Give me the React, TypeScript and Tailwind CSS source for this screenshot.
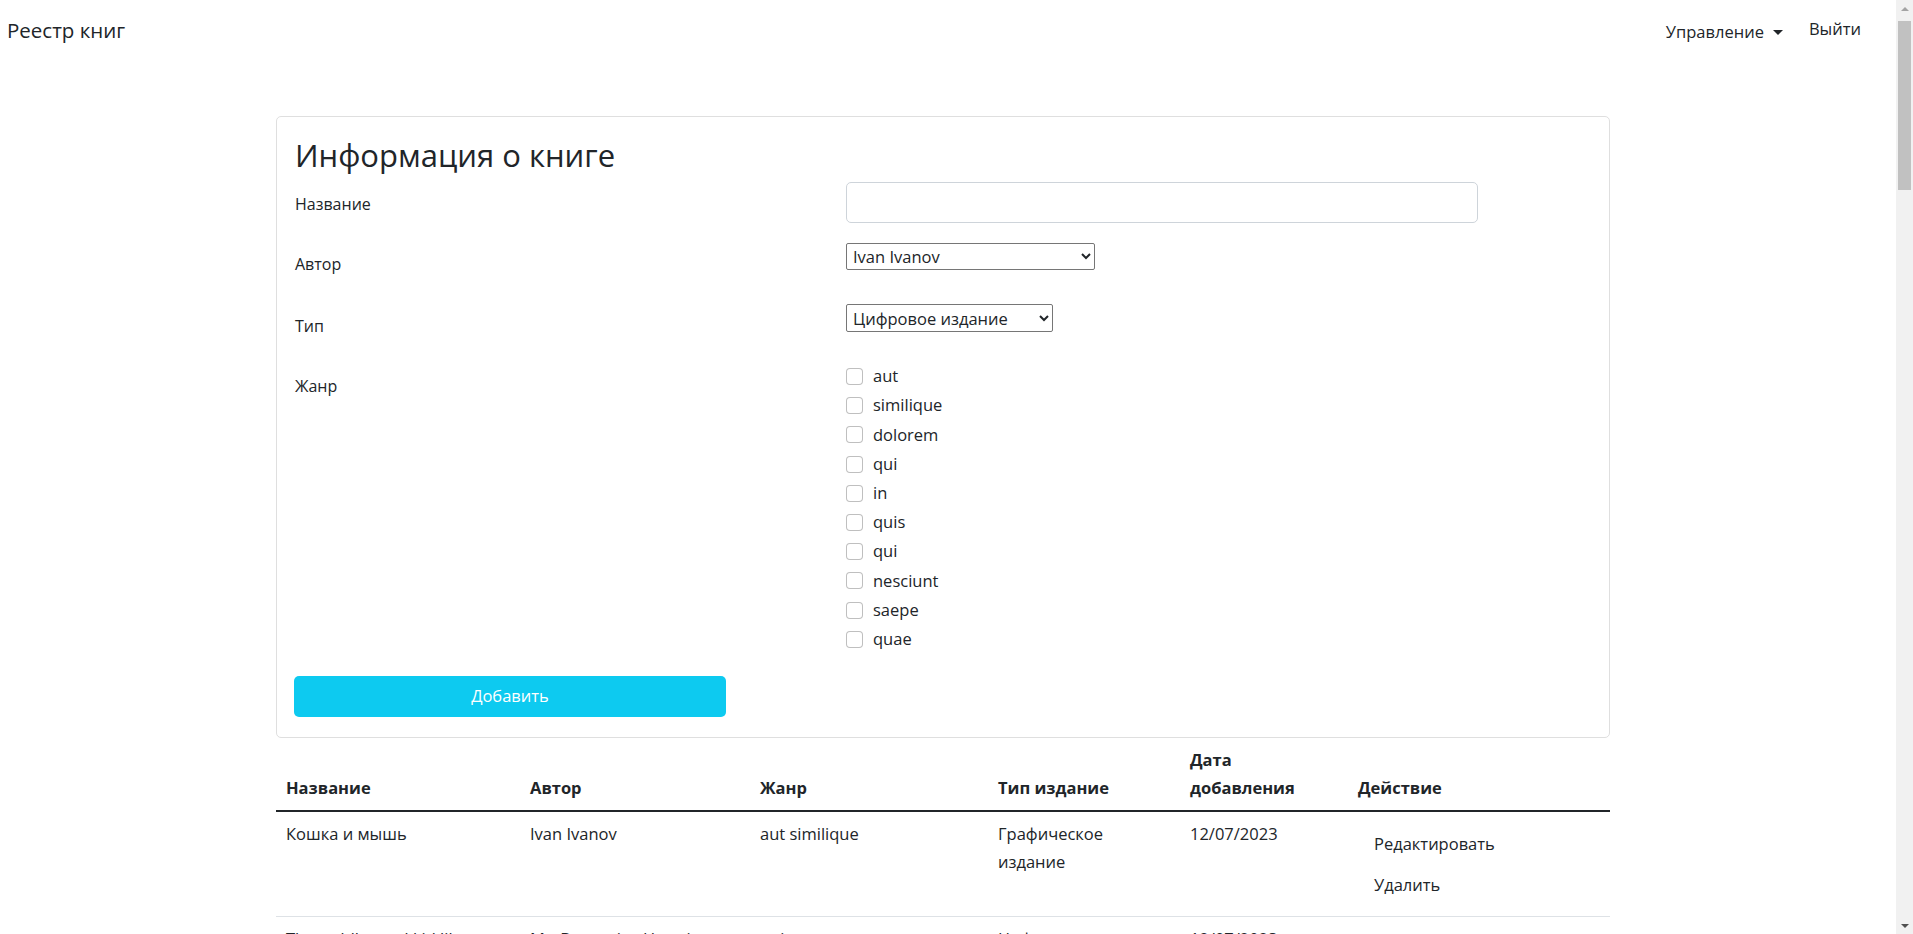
import React from "react";

const genres = ["aut", "similique", "dolorem", "qui", "in", "quis", "qui", "nesciunt", "saepe", "quae"];

type Book = {
  title: string;
  author: string;
  genre: string;
  type: string;
  date: string;
};

const seed: Book[] = [
  { title: "Кошка и мышь", author: "Ivan Ivanov", genre: "aut similique", type: "Графическое издание", date: "12/07/2023" },
  { title: "The toddler and kid library", author: "Mr. Domenico Hermiston", genre: "qui", type: "Цифровое издание", date: "12/07/2023" },
  { title: "Война и мир", author: "Ivan Ivanov", genre: "dolorem quis", type: "Печатное издание", date: "12/07/2023" },
  { title: "Eum eos officiis", author: "Prof. Alena Kuhn", genre: "in saepe", type: "Цифровое издание", date: "12/07/2023" },
];

const books: Book[] = Array.from({ length: 16 }, (_, i) => seed[i % seed.length]);

// window scrollbar as it looks in the screenshot
const Scrollbar = () => (
  <div className="fixed top-0 right-0 w-[17px] h-screen bg-[#f1f1f1] flex flex-col items-center">
    <span className="mt-[7px] w-0 h-0 border-x-[4px] border-x-transparent border-b-[4px] border-b-[#a3a3a3]" />
    <div className="mt-[10px] w-[13px] h-[169px] bg-[#c1c1c1]" />
    <span className="mt-auto mb-[6px] w-0 h-0 border-x-[4px] border-x-transparent border-t-[4px] border-t-[#505050]" />
  </div>
);

const App = () => {
  return (
    <div className="min-h-screen bg-white text-[#212529] font-['Open_Sans',sans-serif] text-[16.5px]">
      <nav className="flex items-center justify-between h-[60px] pl-[7px] pr-[52px]">
        <span className="text-[20.5px] leading-[30px]">Реестр книг</span>
        <div className="flex items-center gap-[26px]">
          <button className="flex items-center gap-[9px] pt-[4px]">
            Управление
            <span className="w-0 h-0 border-x-[5px] border-x-transparent border-t-[5px] border-t-[#212529]" />
          </button>
          <button className="pb-[1px]">Выйти</button>
        </div>
      </nav>

      <main className="ml-[276px] w-[1334px] mt-[56px] pb-10">
        <div className="border border-[#dfdfdf] rounded-[5px] px-[17px] pt-[19px] pb-[20px] text-[16px]">
          <h2 className="text-[31px] font-medium leading-[38px] mb-[8px] pl-[1px]">Информация о книге</h2>

          <div className="flex items-start min-h-[61px]">
            <label className="w-[552px] pl-[1px] pt-[10px] leading-6">Название</label>
            <input className="w-[632px] h-[41px] border border-[#ced4da] rounded-[5px] px-3" />
          </div>

          <div className="flex items-start min-h-[61px]">
            <label className="w-[552px] pl-[1px] pt-[9px] leading-6">Автор</label>
            <select className="w-[249px] h-[27px] border border-[#767676] rounded-[2px] bg-white pl-[2px] text-[16.5px]">
              <option>Ivan Ivanov</option>
              <option>Mr. Domenico Hermiston</option>
            </select>
          </div>

          <div className="flex items-start min-h-[60px]">
            <label className="w-[552px] pl-[1px] pt-[10px] leading-6">Тип</label>
            <select className="w-[207px] h-[28px] border border-[#767676] rounded-[2px] bg-white pl-[2px] text-[16.5px]">
              <option>Цифровое издание</option>
              <option>Графическое издание</option>
            </select>
          </div>

          <div className="flex items-start mb-[22px]">
            <label className="w-[552px] pl-[1px] pt-[10px] leading-6">Жанр</label>
            <div className="flex flex-col -mt-[2px] text-[16.5px]">
              {genres.map((g, i) => (
                <label key={i} className="flex items-center gap-[10px] h-[29.2px]">
                  <input
                    type="checkbox"
                    className="appearance-none w-[17px] h-[17px] border border-black/25 rounded-[4px] bg-white"
                  />
                  <span>{g}</span>
                </label>
              ))}
            </div>
          </div>

          <button className="w-[432px] h-[41px] bg-[#0dcaf0] text-white rounded-[5px] text-[16.5px]">Добавить</button>
        </div>

        <table className="w-full table-fixed border-collapse leading-[28px]">
          <colgroup>
            <col className="w-[244px]" />
            <col className="w-[230px]" />
            <col className="w-[238px]" />
            <col className="w-[192px]" />
            <col className="w-[168px]" />
            <col />
          </colgroup>
          <thead>
            <tr className="border-b-2 border-[#212529] text-left align-bottom">
              <th className="px-[10px] py-2 font-bold">Название</th>
              <th className="px-[10px] py-2 font-bold">Автор</th>
              <th className="px-[10px] py-2 font-bold">Жанр</th>
              <th className="px-[10px] py-2 font-bold">Тип издание</th>
              <th className="px-[10px] py-2 font-bold">Дата добавления</th>
              <th className="px-[10px] py-2 font-bold">Действие</th>
            </tr>
          </thead>
          <tbody>
            {books.map((b, i) => (
              <tr key={i} className="border-b border-[#dee2e6] align-top">
                <td className="px-[10px] pt-2 pb-[10px]">{b.title}</td>
                <td className="px-[10px] pt-2 pb-[10px]">{b.author}</td>
                <td className="px-[10px] pt-2 pb-[10px]">{b.genre}</td>
                <td className="px-[10px] pt-2 pb-[10px]">{b.type}</td>
                <td className="px-[10px] pt-2 pb-[10px]">{b.date}</td>
                <td className="px-[10px] pt-2 pb-[10px]">
                  <div className="flex flex-col items-start mt-[4px]">
                    <button className="h-[41px] px-4">Редактировать</button>
                    <button className="h-[41px] px-4">Удалить</button>
                  </div>
                </td>
              </tr>
            ))}
          </tbody>
        </table>
      </main>

      <Scrollbar />
    </div>
  );
};

export default App;
